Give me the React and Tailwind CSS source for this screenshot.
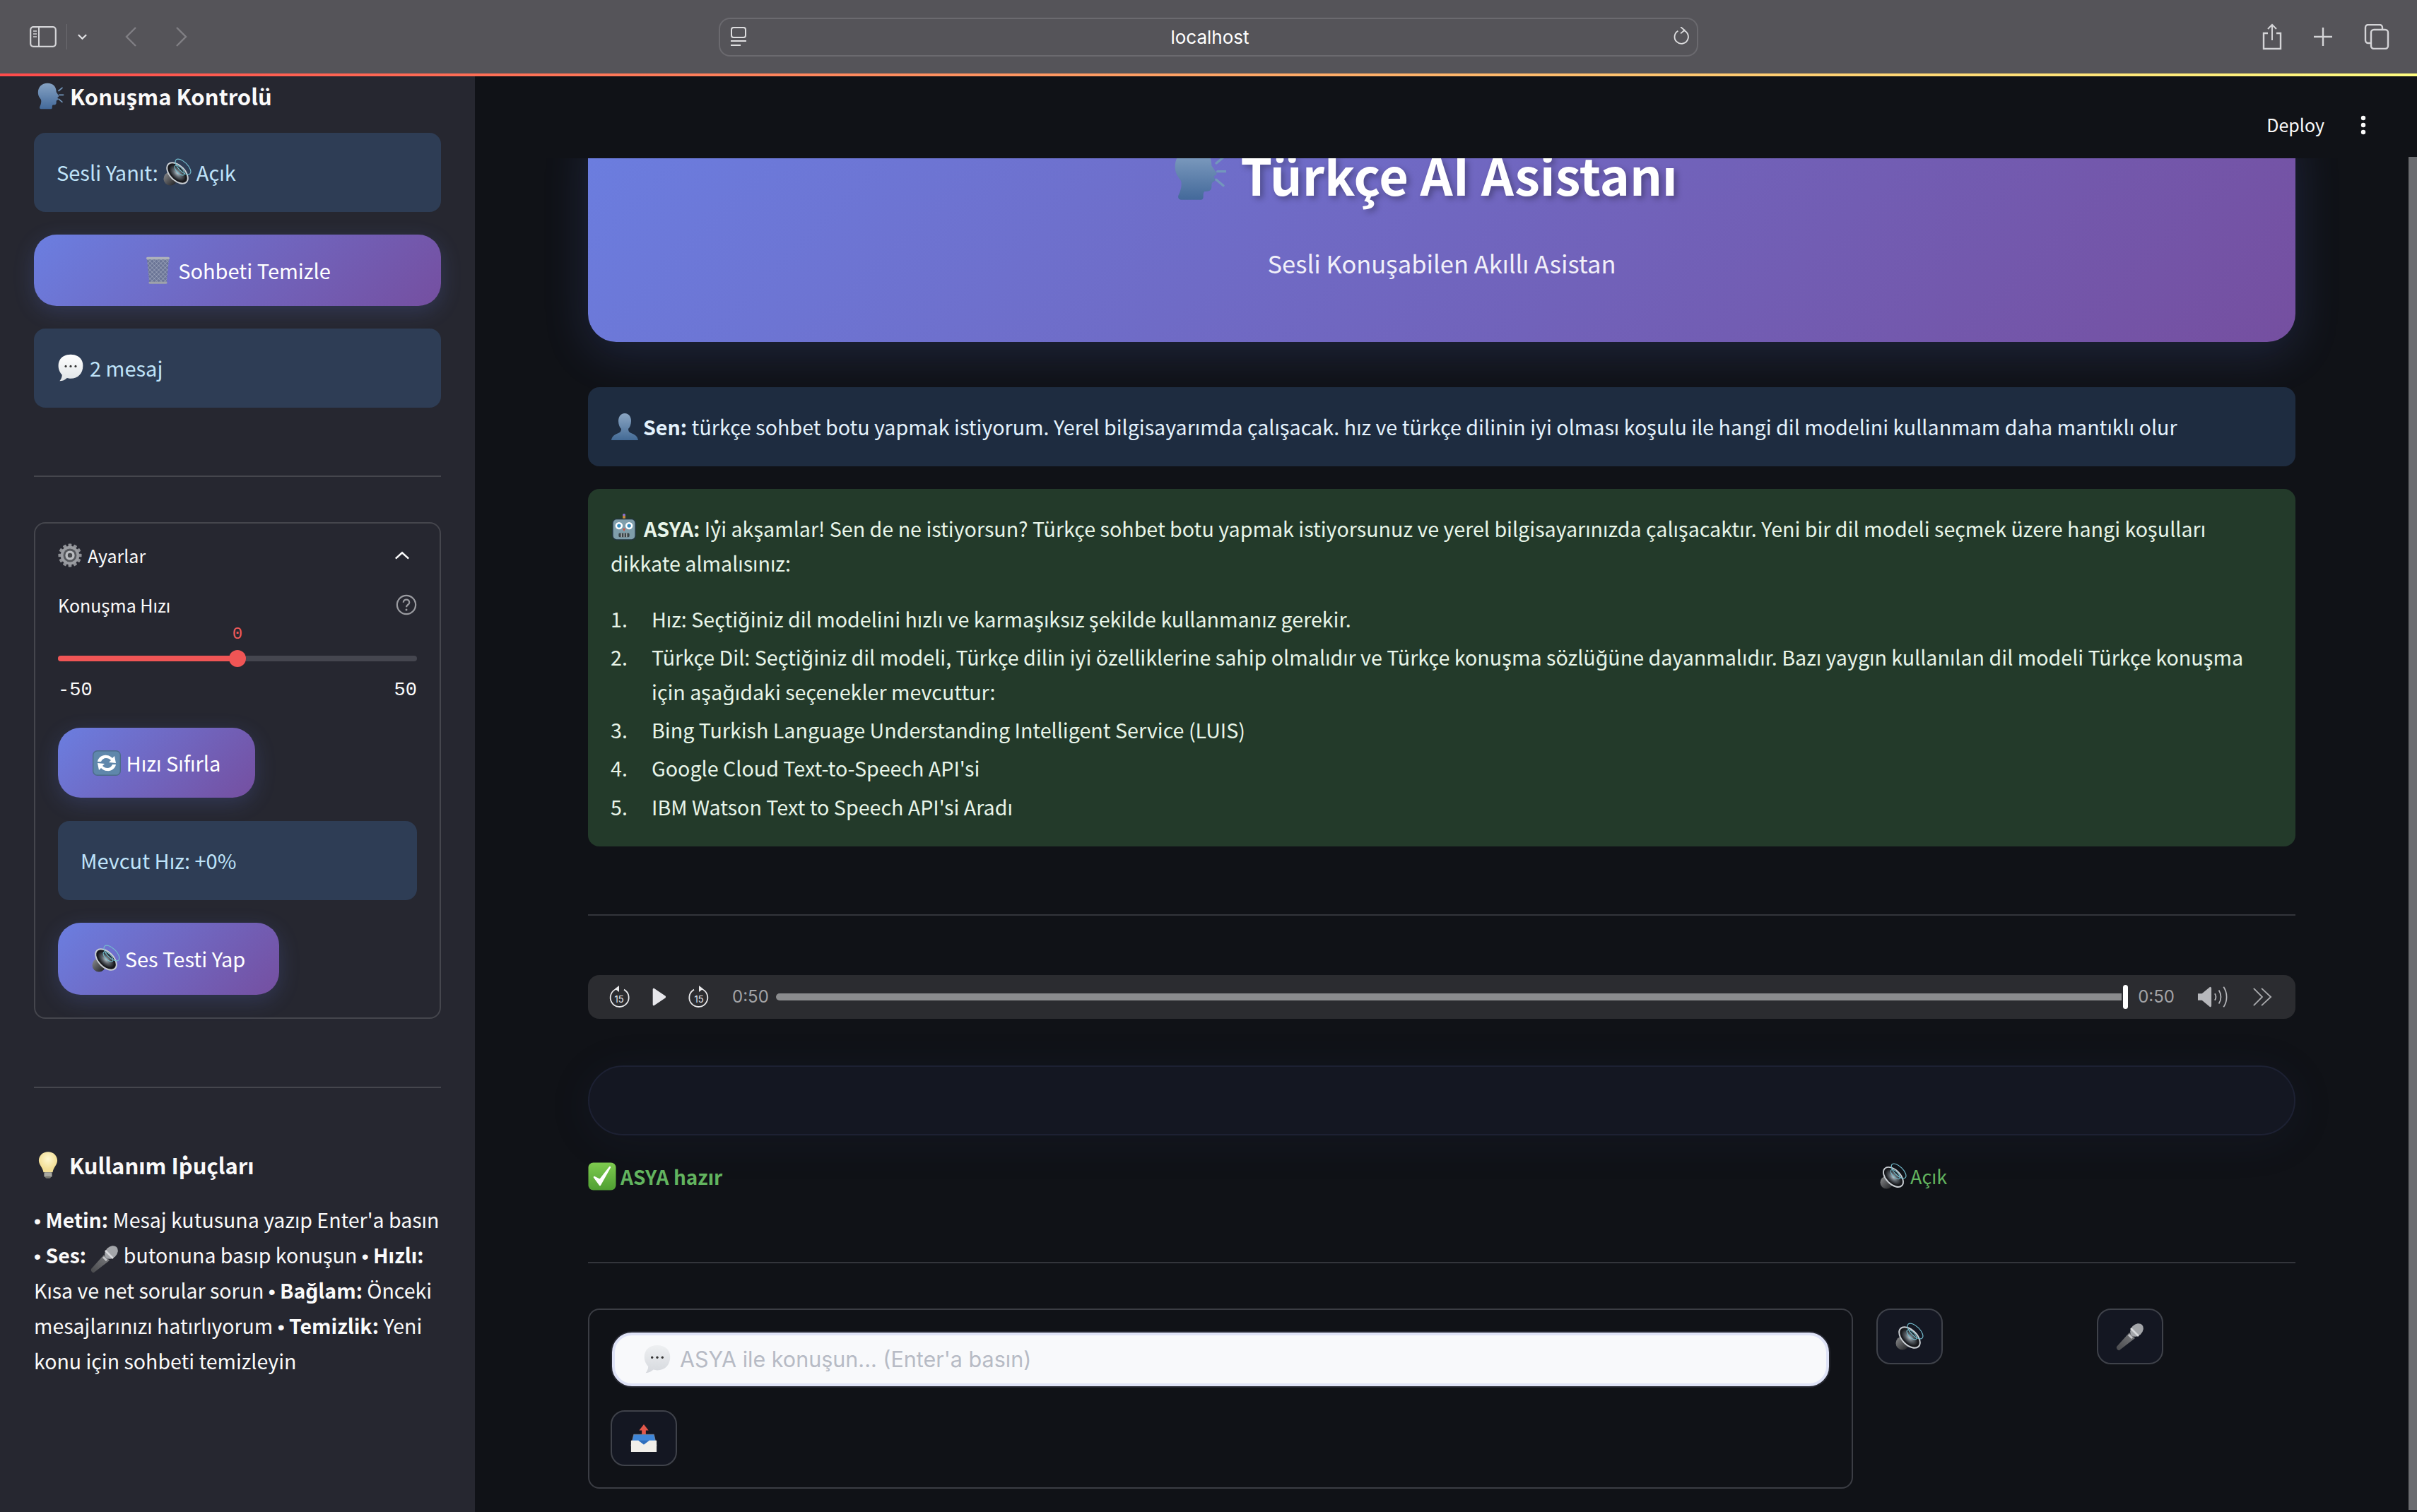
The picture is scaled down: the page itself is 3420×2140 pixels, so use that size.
import React from "react";

const Head = ({ className }) => (
  <svg viewBox="0 0 46 48" className={className}>
    <defs><linearGradient id="hd" x1="0" y1="0" x2="0" y2="1"><stop offset="0" stopColor="#86a3c4" /><stop offset="1" stopColor="#43699a" /></linearGradient></defs>
    <path d="M19 2C9 2 3 9 3 18c0 6 3 9 5 12 1 3 0 8-2 12-1 2 0 4 2 4h17c2 0 2-2 2-3 0-2 0-3 1-4 3 0 6 0 6-4 0-2 0-3 1-4 1 0 2-1 2-2l-1-3c2-1 3-2 2-3l-4-6C34 8 29 2 19 2Z" fill="url(#hd)" />
    <path d="M38 15l6-5M39 22h7M38 29l6 5" stroke="#7397bc" strokeWidth="2" fill="none" strokeLinecap="round" />
  </svg>
);
const Speaker = ({ className }) => (
  <svg viewBox="0 0 40 40" className={className}>
    <defs>
      <radialGradient id="sp"><stop offset="0" stopColor="#b4c2ca" /><stop offset="0.4" stopColor="#5a6168" /><stop offset="0.8" stopColor="#17181c" /></radialGradient>
      <linearGradient id="spb" x1="0" y1="0" x2="1" y2="1"><stop offset="0" stopColor="#8f9092" /><stop offset="1" stopColor="#1a1b1e" /></linearGradient>
    </defs>
    <circle cx="10" cy="29" r="9.5" fill="url(#spb)" />
    <ellipse cx="20" cy="21" rx="10.5" ry="18" transform="rotate(-45 20 21)" fill="url(#sp)" stroke="#c9ced3" strokeWidth="2" />
    <ellipse cx="23" cy="17" rx="4" ry="9" transform="rotate(-45 23 17)" fill="none" stroke="#74bccd" strokeWidth="1.1" />
    <ellipse cx="28" cy="12" rx="6.5" ry="14" transform="rotate(-45 28 12)" fill="none" stroke="#74bccd" strokeWidth="1.2" />
  </svg>
);
const Trash = ({ className }) => (
  <svg viewBox="0 0 40 46" className={className}>
    <defs>
      <pattern id="mesh" width="5" height="5" patternUnits="userSpaceOnUse" patternTransform="rotate(45)"><rect width="5" height="5" fill="#6b7596" /><path d="M0 0H5M0 0V5" stroke="#b4bccf" strokeWidth="1" /></pattern>
    </defs>
    <path d="M2 3h36l-4 40H6Z" fill="url(#mesh)" />
    <rect x="1" y="1" width="38" height="4" rx="2" fill="#aeb2ba" />
    <rect x="5" y="41" width="30" height="3.5" rx="1.7" fill="#9ea2aa" />
  </svg>
);
const Bubble = ({ className, soft }) => (
  <svg viewBox="0 0 42 46" className={className}>
    <defs><linearGradient id={soft ? "bbs" : "bb"} x1="0" y1="0" x2="0" y2="1"><stop offset="0" stopColor={soft ? "#eef0f2" : "#ffffff"} /><stop offset="1" stopColor={soft ? "#d6d9de" : "#dfe3e6"} /></linearGradient></defs>
    <path d="M21 1C9 1 1 8 1 19c0 7 3 12 6 15 0 4-2 8-4 10 5 0 9-2 12-5 2 0 4 1 6 1 12 0 20-8 20-21C41 8 33 1 21 1Z" fill={`url(#${soft ? "bbs" : "bb"})`} />
    <circle cx="13" cy="20" r="1.8" fill="#333" /><circle cx="21" cy="20" r="1.8" fill="#333" /><circle cx="29" cy="20" r="1.8" fill="#333" />
  </svg>
);
const Gear = ({ className }) => (
  <svg viewBox="0 0 36 36" className={className}>
    <g fill="#8f9196">{[0, 30, 60, 90, 120, 150, 180, 210, 240, 270, 300, 330].map((a) => (<rect key={a} x="15.5" y="0.5" width="5" height="6" rx="1" transform={`rotate(${a} 18 18)`} />))}</g>
    <circle cx="18" cy="18" r="14" fill="#9a9ca1" />
    <circle cx="18" cy="18" r="10" fill="#55575c" />
    <circle cx="18" cy="18" r="7" fill="#b9bbbf" />
    <circle cx="18" cy="18" r="3.4" fill="#44464a" />
  </svg>
);
const Sync = ({ className }) => (
  <svg viewBox="0 0 40 36" className={className}>
    <rect x="0.7" y="0.7" width="38.6" height="34.6" rx="6" fill="#5f87ab" stroke="#4c6c8a" strokeWidth="1.4" />
    <path d="M7 16c1-6 7-10 13-9 3 0 6 2 8 4l3-3 2 10-10-1 3-3c-2-2-4-3-7-3-3 0-6 2-7 5Z" fill="#fff" />
    <path d="M33 20c-1 6-7 10-13 9-3 0-6-2-8-4l-3 3-2-10 10 1-3 3c2 2 4 3 7 3 3 0 6-2 7-5Z" fill="#fff" />
  </svg>
);
const Bulb = ({ className }) => (
  <svg viewBox="0 0 30 42" className={className}>
    <defs><radialGradient id="blb" cx="0.5" cy="0.35"><stop offset="0" stopColor="#fff8d0" /><stop offset="1" stopColor="#f3df96" /></radialGradient></defs>
    <path d="M15 1C7 1 1 7 1 14c0 7 6 10 7 18h14c1-8 7-11 7-18C29 7 23 1 15 1Z" fill="url(#blb)" />
    <rect x="9" y="32" width="12" height="7" rx="1.5" fill="#a8a8a0" />
    <rect x="11" y="38" width="8" height="3" rx="1.5" fill="#77776f" />
  </svg>
);
const Mic = ({ className }) => (
  <svg viewBox="0 0 40 40" className={className}>
    <defs><linearGradient id="mich" x1="0" y1="1" x2="1" y2="0"><stop offset="0" stopColor="#48494c" /><stop offset="1" stopColor="#7c7d80" /></linearGradient></defs>
    <path d="M1 34 19 14l8 8-22 17c-2 1-5-2-4-5Z" fill="url(#mich)" />
    <ellipse cx="29.5" cy="10.5" rx="8" ry="10.5" transform="rotate(45 29.5 10.5)" fill="#a3a5a9" />
    <path d="M21 8l11 11" stroke="#d8d9dc" strokeWidth="2.6" />
    <path d="M18 17l5 5" stroke="#c4c5c8" strokeWidth="3" />
  </svg>
);
const Robot = ({ className }) => (
  <svg viewBox="0 0 40 40" className={className}>
    <rect x="18" y="1" width="4" height="8" rx="2" fill="#c98a3a" />
    <rect x="18" y="0" width="4" height="3.5" rx="1.7" fill="#8a6fd0" />
    <rect x="3" y="8" width="34" height="31" rx="6" fill="#7f9eab" stroke="#24363f" strokeWidth="1.6" />
    <circle cx="12.5" cy="18" r="5.5" fill="#fff" /><circle cx="12.5" cy="18" r="2.8" fill="#3a8fc0" />
    <circle cx="27.5" cy="18" r="5.5" fill="#fff" /><circle cx="27.5" cy="18" r="2.8" fill="#3a8fc0" />
    <path d="M18 22h4l-2 4.5Z" fill="#d8503f" />
    <rect x="12" y="29" width="16" height="6" rx="1.5" fill="#3a4448" />
    <path d="M16 29v6M20 29v6M24 29v6" stroke="#cfd6d9" strokeWidth="1" />
  </svg>
);
const Bust = ({ className }) => (
  <svg viewBox="0 0 40 40" className={className}>
    <defs><linearGradient id="bst" x1="0" y1="0" x2="0" y2="1"><stop offset="0" stopColor="#8ba6c3" /><stop offset="1" stopColor="#436a95" /></linearGradient></defs>
    <path d="M20 1c-6 0-9 5-9 11 0 5 2 9 4 11 0 3-1 5-4 6-5 2-9 4-10 10h38c-1-6-5-8-10-10-3-1-4-3-4-6 2-2 4-6 4-11 0-6-3-11-9-11Z" fill="url(#bst)" />
  </svg>
);
const Check = ({ className }) => (
  <svg viewBox="0 0 40 40" className={className}>
    <defs><linearGradient id="chk" x1="0" y1="0" x2="0" y2="1"><stop offset="0" stopColor="#7ecb4f" /><stop offset="1" stopColor="#4f9f32" /></linearGradient></defs>
    <rect x="0.5" y="0.5" width="39" height="39" rx="7" fill="url(#chk)" />
    <path d="M9 21l8 11L31 7l-14 18Z" fill="#fff" stroke="#fff" strokeWidth="2.5" strokeLinejoin="round" />
  </svg>
);
const Outbox = ({ className }) => (
  <svg viewBox="0 0 40 42" className={className}>
    <path d="M20 0l7 9h-4v6h-6V9h-4Z" fill="#e2574a" />
    <path d="M5 15h30l4 17H1Z" fill="#3f86d8" stroke="#7f8da0" strokeWidth="0.8" />
    <path d="M1 24h11l8 6 8-6h11v17H1Z" fill="#f1efea" />
    <path d="M12 24l8 6 8-6Z" fill="#2f6fbd" />
  </svg>
);
const Skip = ({ className, flip }) => (
  <svg viewBox="0 0 32 34" className={className}>
    <path d={flip ? "M19 5.5A13 13 0 1 1 9 6.6" : "M13 5.5A13 13 0 1 0 23 6.6"} fill="none" stroke="#e8e8ea" strokeWidth="1.8" />
    <path d={flip ? "M16 1v9l6-4.5Z" : "M16 1v9l-6-4.5Z"} fill="#e8e8ea" />
    <text x="16" y="24.5" textAnchor="middle" fontSize="13" fill="#e8e8ea" fontFamily="Inter, sans-serif">15</text>
  </svg>
);

const Dot = () => <span className="font-['Liberation_Sans',sans-serif] leading-[0]">•</span>;

const Card = ({ children, className = "" }) => (
  <div className={`flex items-center rounded-[16px] bg-[#2e3d55] px-[32px] text-[#bfe3f9] ${className}`}>{children}</div>
);
const gradBtn = "flex items-center justify-center rounded-[32px] bg-[linear-gradient(135deg,#6b7ee0_0%,#754fa0_100%)] text-white shadow-[0_8px_30px_rgba(102,126,234,0.2)]";

const Sidebar = () => (
  <aside className="flex h-full w-[672px] shrink-0 flex-col bg-[#262730] px-[48px] text-[#fafafa]">
    <div className="flex h-[56px] items-center text-[31px] font-bold">
      <Head className="mr-[8px] ml-[2px] h-[40px] w-[41px]" />
      <span>Konuşma Kontrolü</span>
    </div>
    <Card className="mt-[24px] h-[112px] text-[29px]">
      <span>Sesli Yanıt:</span>
      <Speaker className="mx-[7px] h-[40px] w-[40px]" />
      <span>Açık</span>
    </Card>
    <div className={`${gradBtn} mt-[32px] h-[101px] text-[29px]`}>
      <Trash className="mr-[9px] h-[40px] w-[39px]" />
      <span>Sohbeti Temizle</span>
    </div>
    <Card className="mt-[32px] h-[112px] text-[29px]">
      <Bubble className="mr-[7px] h-[40px] w-[40px]" />
      <span>2 mesaj</span>
    </Card>
    <div className="mt-[96px] h-[2px] bg-[#45464d]" />
    <div className="mt-[64px] flex h-[703px] flex-col rounded-[16px] border-2 border-[#45464d] px-[32px]">
      <div className="mt-[27px] flex h-[36px] items-center justify-between text-[25px] leading-none">
        <div className="flex items-center">
          <Gear className="mr-[8px] h-[34px] w-[34px]" />
          <span>Ayarlar</span>
        </div>
        <svg viewBox="0 0 24 14" className="mr-[10px] h-[14px] w-[22px]"><path d="M2 12 12 3l10 9" fill="none" stroke="#fafafa" strokeWidth="2.8" /></svg>
      </div>
      <div className="mt-[34px] flex h-[36px] items-center justify-between text-[25px] leading-none">
        <span>Konuşma Hızı</span>
        <svg viewBox="0 0 32 32" className="h-[30px] w-[30px]"><circle cx="16" cy="16" r="14" fill="none" stroke="#9a9ba0" strokeWidth="2.4" /><path d="M11.5 12.5c0-6 9-6 9 0 0 3.5-4.5 3.5-4.5 7" fill="none" stroke="#9a9ba0" strokeWidth="2.4" /><circle cx="16" cy="23.5" r="1.6" fill="#9a9ba0" /></svg>
      </div>
      <div className="mt-[10px] text-center font-['Liberation_Mono',monospace] text-[24px] leading-[28px] text-[#f05a5a]">0</div>
      <div className="relative mt-[8px] flex h-[24px] items-center">
        <div className="flex h-[8px] w-full overflow-hidden rounded-full bg-[#45464f]">
          <div className="h-full w-1/2 bg-[#f05555]" />
        </div>
        <div className="absolute top-0 left-[242px] h-[24px] w-[24px] rounded-full bg-[#f05555]" />
      </div>
      <div className="mt-[19px] flex h-[28px] items-center justify-between font-['Liberation_Mono',monospace] text-[27px] leading-none">
        <span>-50</span><span>50</span>
      </div>
      <div className={`${gradBtn} mt-[39px] h-[99px] w-[279px] text-[29px]`}>
        <Sync className="mr-[8px] h-[36px] w-[40px]" />
        <span>Hızı Sıfırla</span>
      </div>
      <Card className="mt-[33px] h-[112px] text-[29px]">Mevcut Hız: +0%</Card>
      <div className={`${gradBtn} mt-[32px] h-[102px] w-[313px] text-[29px]`}>
        <Speaker className="mr-[7px] h-[40px] w-[40px]" />
        <span>Ses Testi Yap</span>
      </div>
    </div>
    <div className="mt-[96px] h-[2px] bg-[#45464d]" />
    <div className="mt-[84px] flex h-[50px] items-center text-[31px] font-bold">
      <Bulb className="mr-[16px] ml-[6px] h-[42px] w-[28px]" />
      <span>Kullanım İpuçları</span>
    </div>
    <p className="mt-[27px] text-[28.5px] leading-[50px]">
      <Dot /> <b>Metin:</b> Mesaj kutusuna yazıp Enter'a basın <Dot /> <b>Ses:</b> <Mic className="my-[-8px] inline-block h-[40px] w-[40px] align-[-6px]" /> butonuna basıp konuşun <Dot /> <b>Hızlı:</b> Kısa ve net sorular sorun <Dot /> <b>Bağlam:</b> Önceki mesajlarınızı hatırlıyorum <Dot /> <b>Temizlik:</b> Yeni konu için sohbeti temizleyin
    </p>
  </aside>
);

const IconButton = ({ children, className = "" }) => (
  <div className={`flex h-[79px] w-[94px] items-center justify-center rounded-[20px] border-2 border-[#3f424a] bg-[#141722] ${className}`}>{children}</div>
);

const Main = () => (
  <main className="relative flex h-full min-w-0 flex-1 flex-col bg-[#101217]">
    <header className="flex h-[116px] shrink-0 items-center justify-end pt-[22px] pr-[72px] text-[25px] text-[#fafafa]">
      <span className="mr-[51px]">Deploy</span>
      <svg viewBox="0 0 8 28" className="h-[28px] w-[8px]"><circle cx="4" cy="4" r="3.2" fill="#fafafa" /><circle cx="4" cy="14" r="3.2" fill="#fafafa" /><circle cx="4" cy="24" r="3.2" fill="#fafafa" /></svg>
    </header>
    <div className="min-h-0 flex-1 overflow-hidden pr-[172px] pl-[160px]">
      <section className="mt-[-60px] flex h-[320px] flex-col items-center rounded-[40px] bg-[linear-gradient(135deg,#6b7ee0_0%,#754fa0_100%)] shadow-[0_16px_64px_rgba(102,126,234,0.18)]">
        <div className="mt-[22px] mr-[49px] flex h-[120px] items-center text-[72px] leading-none font-bold text-white [text-shadow:4px_4px_8px_rgba(0,0,0,0.3)]">
          <Head className="mr-[20px] h-[80px] w-[78px]" />
          <span>Türkçe AI Asistanı</span>
        </div>
        <div className="mt-[38px] text-[34.5px] leading-[56px] text-white/90">Sesli Konuşabilen Akıllı Asistan</div>
      </section>
      <div className="mt-[64px] flex h-[112px] items-center rounded-[16px] bg-[#1e2c40] px-[32px] text-[28.65px] text-[#e3f2fd]">
        <Bust className="mr-[6px] h-[40px] w-[40px]" />
        <span><b>Sen:</b> türkçe sohbet botu yapmak istiyorum. Yerel bilgisayarımda çalışacak. hız ve türkçe dilinin iyi olması koşulu ile hangi dil modelini kullanmam daha mantıklı olur</span>
      </div>
      <div className="mt-[32px] flex h-[506px] flex-col rounded-[16px] bg-[#233a2a] px-[32px] pt-[32px] text-[28.65px] leading-[48.6px] text-[#e8f5e9]">
        <p>
          <Robot className="mr-[9px] inline-block h-[38px] w-[38px] align-[-5px]" /><b>ASYA:</b> İyi akşamlar! Sen de ne istiyorsun? Türkçe sohbet botu yapmak istiyorsunuz ve yerel bilgisayarınızda çalışacaktır. Yeni bir dil modeli seçmek üzere hangi koşulları dikkate almalısınız:
        </p>
        <ol className="mt-[31px] flex list-none flex-col gap-[5.6px]">
          {[
            "Hız: Seçtiğiniz dil modelini hızlı ve karmaşıksız şekilde kullanmanız gerekir.",
            "Türkçe Dil: Seçtiğiniz dil modeli, Türkçe dilin iyi özelliklerine sahip olmalıdır ve Türkçe konuşma sözlüğüne dayanmalıdır. Bazı yaygın kullanılan dil modeli Türkçe konuşma için aşağıdaki seçenekler mevcuttur:",
            "Bing Turkish Language Understanding Intelligent Service (LUIS)",
            "Google Cloud Text-to-Speech API'si",
            "IBM Watson Text to Speech API'si Aradı",
          ].map((t, i) => (
            <li key={i} className="flex"><span className="w-[58px] shrink-0">{i + 1}.</span><span>{t}</span></li>
          ))}
        </ol>
      </div>
      <div className="mt-[96px] h-[2px] bg-[#33353b]" />
      <div className="mt-[84px] flex h-[62px] items-center rounded-[16px] bg-[#2b2c30] pr-[33px] pl-[28px] font-['Inter',sans-serif] text-[24px] text-[#a2a3a6]">
        <Skip className="h-[34px] w-[32px]" />
        <svg viewBox="0 0 22 28" className="ml-[30px] h-[26px] w-[22px]"><path d="M1 2.5c0-1.5 1.2-2 2.2-1.4L20 12.5c1 .7 1 2.3 0 3L3.2 26.9C2.2 27.5 1 27 1 25.5Z" fill="#e6e6ea" /></svg>
        <Skip flip className="ml-[29px] h-[34px] w-[32px]" />
        <span className="ml-[31px]">0:50</span>
        <div className="relative ml-[10px] flex h-[34px] flex-1 items-center">
          <div className="h-[10px] w-full rounded-l-full bg-[#8b8c8e]" />
        </div>
        <div className="ml-[2px] h-[34px] w-[7px] rounded-full bg-white" />
        <span className="ml-[14px]">0:50</span>
        <svg viewBox="0 0 46 32" className="ml-[32px] h-[32px] w-[44px]"><path d="M1 11h6l12-10c1 0 2 1 2 2v26c0 1-1 2-2 2L7 21H1Z" fill="#b7b8bc" /><path d="M26 11c2 3 2 7 0 10M32 6c4 6 4 14 0 20M39 1c6 9 6 21 0 30" fill="none" stroke="#b7b8bc" strokeWidth="1.8" /></svg>
        <svg viewBox="0 0 30 28" className="ml-[34px] h-[28px] w-[28px]"><path d="M2 1l13 13L2 27M14 1l14 13-14 13" fill="none" stroke="#a9aaad" strokeWidth="2" /></svg>
      </div>
      <div className="mt-[66px] h-[99px] rounded-[50px] border-2 border-[#1d2133] bg-[#141722] shadow-[0_8px_60px_rgba(40,60,110,0.12)]" />
      <div className="mt-[36px] flex h-[44px] items-center text-[28px] text-[#62b45f]">
        <div className="flex w-[1828px] items-center font-bold">
          <Check className="mr-[6px] h-[40px] w-[40px]" />
          <span>ASYA hazır</span>
        </div>
        <Speaker className="mr-[5px] h-[38px] w-[38px]" />
        <span className="text-[27px]">Açık</span>
      </div>
      <div className="mt-[99px] h-[2px] bg-[#33353b]" />
      <div className="mt-[64px] flex">
        <div className="w-[1790px] rounded-[16px] border-2 border-[#3b3d44] p-[30px]">
          <div className="rounded-[30px] bg-[#24262f] p-[2px]">
            <div className="flex h-[76px] items-center rounded-[28px] border-4 border-[#dfe3f7] bg-[#f8f9fb] pl-[40px] font-['Inter',sans-serif] text-[30.5px] text-[#b7bbc5]">
              <Bubble soft className="mr-[12px] h-[42px] w-[40px]" />
              <span>ASYA ile konuşun... (Enter'a basın)</span>
            </div>
          </div>
          <IconButton className="mt-[32px]"><Outbox className="h-[40px] w-[40px]" /></IconButton>
        </div>
        <div className="ml-[33px] w-[312px]"><IconButton><Speaker className="h-[40px] w-[40px]" /></IconButton></div>
        <div><IconButton><Mic className="h-[40px] w-[40px]" /></IconButton></div>
      </div>
    </div>
    <div className="absolute top-[114px] right-0 bottom-[3px] w-[12px] bg-[#6b6c70]" />
  </main>
);

const Toolbar = () => (
  <div className="flex h-[104px] shrink-0 items-center bg-[#555459] text-[#e5e5e8]">
    <div className="flex w-[1017px] shrink-0 items-center pl-[42px]">
      <svg viewBox="0 0 38 30" className="h-[30px] w-[38px]"><rect x="1.2" y="1.2" width="35.6" height="27.6" rx="4" fill="none" stroke="#d4d4d7" strokeWidth="2.2" /><path d="M13 1v28" stroke="#d4d4d7" strokeWidth="2" /><path d="M5 7h5M5 11h5M5 15h5" stroke="#d4d4d7" strokeWidth="1.6" /></svg>
      <div className="ml-[14px] h-[36px] w-px bg-[#6c6b70]" />
      <svg viewBox="0 0 16 10" className="ml-[14px] h-[10px] w-[15px]"><path d="M2 2l6 6 6-6" fill="none" stroke="#e5e5e8" strokeWidth="2.2" /></svg>
      <svg viewBox="0 0 18 30" className="ml-[52px] h-[30px] w-[18px]"><path d="M16 2 3 15l13 13" fill="none" stroke="#807f84" strokeWidth="2.4" /></svg>
      <svg viewBox="0 0 18 30" className="ml-[54px] h-[30px] w-[18px]"><path d="M2 2l13 13L2 28" fill="none" stroke="#807f84" strokeWidth="2.4" /></svg>
    </div>
    <div className="flex h-[55px] w-[1386px] shrink-0 items-center justify-between rounded-[16px] border-2 border-[#6b6a6f] pr-[10px] pl-[14px] font-['Inter',sans-serif] text-[26px] text-white">
      <svg viewBox="0 0 24 28" className="h-[28px] w-[24px]"><rect x="2" y="1" width="20" height="14" rx="3" fill="none" stroke="#dedee0" strokeWidth="2" /><path d="M1 20h22M1 26h14" stroke="#dedee0" strokeWidth="2" /></svg>
      <span>localhost</span>
      <svg viewBox="0 0 26 30" className="h-[28px] w-[24px]"><path d="M16 5a10.5 10.5 0 1 1-8 1" fill="none" stroke="#dedee0" strokeWidth="2" /><path d="M12 0l6 5-6 5" fill="none" stroke="#dedee0" strokeWidth="2" /></svg>
    </div>
    <div className="flex flex-1 items-center justify-end pr-[39px]">
      <svg viewBox="0 0 30 38" className="h-[38px] w-[30px]"><path d="M9 14H3v22h24V14h-6" fill="none" stroke="#d4d4d7" strokeWidth="2.4" /><path d="M15 24V2M9 8l6-6 6 6" fill="none" stroke="#d4d4d7" strokeWidth="2" /></svg>
      <svg viewBox="0 0 28 28" className="ml-[43px] h-[28px] w-[28px]"><path d="M14 1v26M1 14h26" stroke="#d4d4d7" strokeWidth="2.4" /></svg>
      <svg viewBox="0 0 36 36" className="ml-[44px] h-[36px] w-[36px]"><rect x="10" y="8" width="24" height="27" rx="4" fill="none" stroke="#d4d4d7" strokeWidth="2.4" /><path d="M10 27H6a4 4 0 0 1-4-4V5a4 4 0 0 1 4-4h16a4 4 0 0 1 4 4v3" fill="none" stroke="#d4d4d7" strokeWidth="2.4" /></svg>
    </div>
  </div>
);

export default function App() {
  return (
    <div className="flex h-[2140px] w-[3420px] flex-col overflow-hidden bg-[#101217] font-['Noto_Sans_CJK_SC','Noto_Sans',sans-serif]">
      <Toolbar />
      <div className="h-[4px] shrink-0 bg-[linear-gradient(90deg,#ff4b4b,#fffd80)]" />
      <div className="flex min-h-0 flex-1">
        <Sidebar />
        <Main />
      </div>
    </div>
  );
}
